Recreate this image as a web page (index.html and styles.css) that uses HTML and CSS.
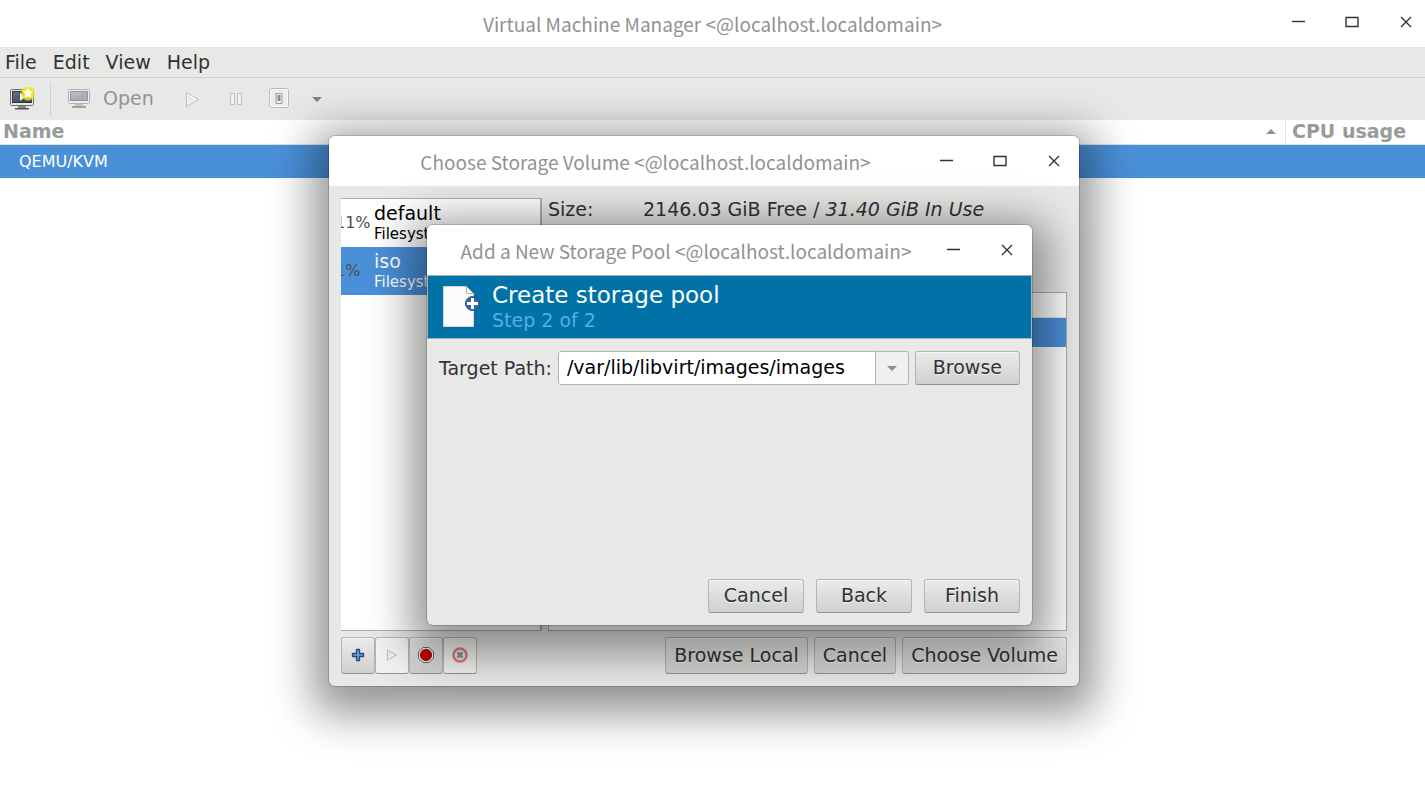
FILE: index.html
```
<!DOCTYPE html>
<html lang="en">
<head>
  <meta charset="UTF-8" />
  <meta name="viewport" content="width=device-width, initial-scale=1.0" />
  <title>Virtual Machine Manager</title>
  <link rel="stylesheet" href="styles.css">
</head>
<body>
  <main class="manager">
    <header class="titlebar titlebar-main">
      <h1 class="title">Virtual Machine Manager &lt;@localhost.localdomain&gt;</h1>
      <div class="controls">
        <button class="control" aria-label="Minimize"><svg width="16" height="16" stroke-width="1.4"><path d="M2 7.500h13" /></svg></button>
        <button class="control" aria-label="Maximize"><svg width="16" height="16" stroke-width="1.4"><path d="M2 3.500h12v9H2z" /></svg></button>
        <button class="control" aria-label="Close"><svg width="16" height="16" stroke-width="1.4"><path d="M3 3l10 10M13 3L3 13" /></svg></button>
      </div>
    </header>

    <nav class="menubar">
      <button>File</button>
      <button>Edit</button>
      <button>View</button>
      <button>Help</button>
    </nav>

    <div class="toolbar">
      <button class="tool tool-new" aria-label="New virtual machine">
        <svg width="26" height="24" viewBox="0 0 26 24">
          <defs>
            <radialGradient id="glow"><stop offset=".4" stop-color="#fdf21c" /><stop offset=".75" stop-color="#f0e62e" stop-opacity=".8" /><stop offset="1" stop-color="#f2ea40" stop-opacity="0" /></radialGradient>
            <linearGradient id="screen" x2="1" y2="1"><stop stop-color="#68798f" /><stop offset="1" stop-color="#27364a" /></linearGradient>
          </defs>
          <rect x="1.500" y="2.500" width="23" height="16" rx="1" fill="#e6e6e2" stroke="#6e706c" />
          <rect x="3.500" y="4.500" width="19" height="11" fill="url(#screen)" stroke="#303a47" />
          <path d="M11 6l5 4-5 4z" fill="#fff" />
          <path d="M9 19h8v2H9z" fill="#888a85" />
          <path d="M6 21h14v1.500H6z" fill="#555753" />
          <circle cx="19" cy="6.500" r="8" fill="url(#glow)" />
          <path d="M19 1l1.600 3.300 3.700.3-2.800 2.500.9 3.700-3.400-1.900-3.400 1.900.9-3.700-2.800-2.500 3.700-.3z" fill="#fff" />
        </svg>
      </button>
      <span class="tool-separator"></span>
      <button class="tool tool-open" disabled>
        <svg width="24" height="22" viewBox="0 0 24 22">
          <rect x="1.500" y="2.500" width="21" height="14" rx="1" fill="#eeeeec" stroke="#b1b3b0" />
          <rect x="3.500" y="4.500" width="17" height="9" fill="#a6afbb" stroke="#8d96a3" />
          <path d="M4 5h16L4 11z" fill="#b4bbc4" />
          <path d="M8 17h8v2H8z" fill="#c0c1bf" />
          <path d="M5 19h14v2H5z" fill="#a1a3a0" />
        </svg>
        <span>Open</span>
      </button>
      <button class="tool tool-run" disabled aria-label="Run">
        <svg width="24" height="24" viewBox="0 0 24 24"><path d="M6.500 5.500v14l12-7z" fill="#ececea" stroke="#bcbebb" /><path d="M7.500 7.500v10l9-5z" fill="none" stroke="#f8f8f7" /></svg>
      </button>
      <button class="tool tool-pause" disabled aria-label="Pause">
        <svg width="24" height="24" viewBox="0 0 24 24"><path d="M6.500 6.500h4v11h-4zM13.500 6.500h4v11h-4z" fill="#f2f2f1" stroke="#bfc1be" /></svg>
      </button>
      <button class="tool tool-power" disabled aria-label="Shut down">
        <svg width="24" height="24" viewBox="0 0 24 24">
          <rect x="2.500" y="1.500" width="19" height="19" rx="2" fill="#ededec" stroke="#b9bbb8" />
          <rect x="3.500" y="2.500" width="17" height="17" rx="1" fill="none" stroke="#fafafa" />
          <path d="M9 6.500h6v10H9z" fill="#eee" stroke="#9b9d9a" />
          <path d="M10.500 8h3v6h-3z" fill="#8c8e8b" />
        </svg>
      </button>
      <button class="tool tool-more" disabled aria-label="More"><svg width="10" height="5"><path d="M0 0h10L5 5z" /></svg></button>
    </div>

    <table class="machines">
      <thead>
        <tr>
          <th><span class="sort-head">Name<svg width="10" height="5"><path d="M0 5h10L5 0z" /></svg></span></th>
          <th class="cpu">CPU usage</th>
        </tr>
      </thead>
      <tbody>
        <tr><td>QEMU/KVM</td><td></td></tr>
      </tbody>
    </table>
  </main>

  <section class="window volume-window" role="dialog" aria-labelledby="volume-title">
    <header class="titlebar">
      <h2 class="title" id="volume-title">Choose Storage Volume &lt;@localhost.localdomain&gt;</h2>
      <div class="controls">
        <button class="control" aria-label="Minimize"><svg width="16" height="16" stroke-width="1.4"><path d="M2 7.500h13" /></svg></button>
        <button class="control" aria-label="Maximize"><svg width="16" height="16" stroke-width="1.4"><path d="M2 3.500h12v9H2z" /></svg></button>
        <button class="control" aria-label="Close"><svg width="16" height="16" stroke-width="1.4"><path d="M3 3l10 10M13 3L3 13" /></svg></button>
      </div>
    </header>
    <div class="volume-body">
      <div class="panes">
        <ul class="pools">
          <li>
            <span class="percent">11%</span>
            <span class="pool"><span class="pool-name">default</span><span>Filesystem</span></span>
          </li>
          <li class="selected">
            <span class="percent">1%</span>
            <span class="pool"><span class="pool-name">iso</span><span>Filesystem</span></span>
          </li>
        </ul>
        <div class="details">
          <dl class="facts">
            <dt>Size:</dt>
            <dd>2146.03 GiB Free / <em>31.40 GiB In Use</em></dd>
          </dl>
          <div class="volumes">
            <table>
              <thead><tr><th></th></tr></thead>
              <tbody><tr><td></td></tr></tbody>
            </table>
          </div>
        </div>
      </div>
      <footer class="volume-actions">
        <div class="pool-buttons">
          <button class="btn" aria-label="Add pool">
            <svg width="16" height="16" viewBox="0 0 16 16"><path d="M6.500 2.500h3v4h4v3h-4v4h-3v-4h-4v-3h4z" fill="#6f9bd1" stroke="#204a87" stroke-width="1.300" stroke-linejoin="round" /></svg>
          </button>
          <button class="btn" disabled aria-label="Start pool">
            <svg width="16" height="16" viewBox="0 0 16 16"><path d="M3.500 3v10l9-5z" fill="#eee" stroke="#bcbdbb" /></svg>
          </button>
          <button class="btn" aria-label="Stop pool">
            <svg width="16" height="16" viewBox="0 0 16 16"><path d="M5 .5h6L15.500 5v6L11 15.500H5L.5 11V5z" fill="#eeeeec" stroke="#666864" /><circle cx="8" cy="8" r="5.500" fill="#c00" stroke="#900" /></svg>
          </button>
          <button class="btn" disabled aria-label="Delete pool">
            <svg width="16" height="16" viewBox="0 0 16 16"><circle cx="8" cy="8" r="6.500" fill="#efe9e9" stroke="#df7b7b" stroke-width="2.500" /><path d="M5.500 5.500l5 5M10.500 5.500l-5 5" stroke="#8f918e" stroke-width="2.500" /></svg>
          </button>
        </div>
        <div class="volume-buttons">
          <button class="btn">Browse Local</button>
          <button class="btn">Cancel</button>
          <button class="btn">Choose Volume</button>
        </div>
      </footer>
    </div>
  </section>

  <section class="window pool-window" role="dialog" aria-labelledby="pool-title">
    <header class="titlebar">
      <h2 class="title" id="pool-title">Add a New Storage Pool &lt;@localhost.localdomain&gt;</h2>
      <div class="controls">
        <button class="control" aria-label="Minimize"><svg width="16" height="16" stroke-width="1.4"><path d="M2 7.500h13" /></svg></button>
        <button class="control" aria-label="Close"><svg width="16" height="16" stroke-width="1.4"><path d="M3 3l10 10M13 3L3 13" /></svg></button>
      </div>
    </header>
    <div class="banner">
      <svg width="40" height="44" viewBox="0 0 40 44">
        <path d="M2.500 2.500h23l7 7v33h-30z" fill="#fbfbfa" stroke="#d6d6d2" />
        <path d="M25.500 2.500v7h7z" fill="#fff" stroke="#b5b5b0" />
        <circle cx="31.500" cy="19.500" r="7" fill="#3465a4" stroke="#2b568e" />
        <path d="M31.500 14v11M26 19.500h11" stroke="#fff" stroke-width="3" />
      </svg>
      <div>
        <h3>Create storage pool</h3>
        <p>Step 2 of 2</p>
      </div>
    </div>
    <form class="pool-form">
      <div class="path-row">
        <label for="target-path">Target Path:</label>
        <div class="combo">
          <input type="text" id="target-path" value="/var/lib/libvirt/images/images">
          <button type="button" aria-label="Show paths"><svg width="10" height="5"><path d="M0 0h10L5 5z" /></svg></button>
        </div>
        <button type="button" class="btn">Browse</button>
      </div>
      <div class="wizard-buttons">
        <button type="button" class="btn">Cancel</button>
        <button type="button" class="btn">Back</button>
        <button type="button" class="btn">Finish</button>
      </div>
    </form>
  </section>
</body>
</html>
```

FILE: styles.css
```
* {
  box-sizing: border-box;
}

body {
  margin: 0;
  background: #fff;
  color: #2e3436;
  font-family: "DejaVu Sans", sans-serif;
  font-size: 19px;
  line-height: 22px;
}

button, input {
  font: inherit;
  color: inherit;
  margin: 0;
}

h1, h2, h3, p, dl, dd, ul {
  margin: 0;
  padding: 0;
  font-weight: normal;
}

svg {
  display: block;
}

table {
  width: 100%;
  border-spacing: 0;
}

/* title bars */
.titlebar {
  display: flex;
  align-items: center;
  height: 50px;
  background: #fff;
}

.titlebar-main {
  position: relative;
  height: 47px;
}

.title {
  flex: 1;
  padding-top: 2px;
  text-align: center;
  white-space: nowrap;
  color: #929292;
  font-family: "Noto Sans CJK SC", sans-serif;
  font-size: 19px;
  line-height: 28px;
}

.titlebar-main .title {
  padding-top: 0;
}

.controls {
  display: flex;
  gap: 18px;
  padding-right: 7px;
}

.titlebar-main .controls {
  position: absolute;
  top: 4px;
  right: 1px;
  padding-right: 0;
}

.control {
  display: flex;
  align-items: center;
  justify-content: center;
  width: 36px;
  height: 36px;
  padding: 0;
  border: none;
  background: none;
}

.control svg {
  fill: none;
  stroke: #2e3436;
}

/* main window */
.manager {
  min-height: 100vh;
}

.menubar {
  display: flex;
  gap: 16px;
  height: 31px;
  padding: 0 5px;
  background: #e8e8e6;
  border-bottom: 1px solid #cfcfcd;
}

.menubar button {
  padding: 0;
  border: none;
  background: none;
}

.toolbar {
  display: flex;
  align-items: center;
  height: 42px;
  padding-left: 9px;
  background: #e8e8e6;
}

.tool {
  display: flex;
  align-items: center;
  padding: 0;
  border: none;
  background: none;
}

.tool-separator {
  height: 34px;
  margin: 0 16px 0 15px;
  border-left: 1px solid #d0d0ce;
}

.tool-open {
  gap: 12px;
  margin-right: 26px;
  padding-bottom: 2px;
  color: #919494;
}

.tool-run {
  margin-right: 20px;
}

.tool-pause {
  margin-right: 19px;
}

.tool-power {
  margin-right: 21px;
}

.tool-more svg {
  fill: #7f8485;
}

.machines th {
  height: 25px;
  padding: 0 3px 2px;
  border-bottom: 1px solid #e0e0de;
  color: #979b9a;
  text-align: left;
}

.machines .cpu {
  width: 140px;
  padding: 0 6px 2px;
  border-left: 1px solid #e0e0de;
}

.sort-head {
  display: flex;
  align-items: center;
  justify-content: space-between;
  padding-right: 6px;
}

.sort-head svg {
  fill: #8f9392;
}

.machines td {
  height: 33px;
  padding: 0 19px;
  background: #4a90d9;
  color: #fff;
  font-size: 16px;
}

/* floating windows */
.window {
  position: absolute;
  display: flex;
  flex-direction: column;
  overflow: hidden;
  background: #e8e8e6;
  border-radius: 6px;
  box-shadow: 0 0 0 1px rgba(0, 0, 0, 0.16), 0 12px 44px 16px rgba(0, 0, 0, 0.42);
}

.volume-window {
  left: 329px;
  top: 136px;
  width: 750px;
  height: 550px;
}

.pool-window {
  left: 427px;
  top: 225px;
  width: 605px;
  height: 400px;
}

.volume-window .titlebar {
  padding-left: 34px;
}

.pool-window .titlebar {
  padding-left: 10px;
}

.btn {
  display: flex;
  align-items: center;
  justify-content: center;
  height: 34px;
  padding: 0 8px 2px;
  border: 1px solid #b4b4b0;
  border-bottom-color: #93938f;
  border-radius: 3px;
  background: linear-gradient(#ebebea, #d0d0ce);
  box-shadow: inset 0 1px #f6f6f5;
  text-shadow: 0 1px #f0f0ef;
  white-space: nowrap;
}

/* choose volume */
.volume-body {
  flex: 1;
  display: flex;
  flex-direction: column;
  gap: 6px;
  padding: 12px;
}

.panes {
  flex: 1;
  display: flex;
  gap: 6px;
}

.pools {
  width: 201px;
  overflow: hidden;
  list-style: none;
  background: #fff;
  border: 1px solid #adada9;
  border-left: none;
  border-right-width: 2px;
  color: #000;
  font-size: 16px;
}

.pools li {
  display: flex;
  align-items: center;
  height: 48px;
}

.pools .selected {
  background: #4a90d9;
  color: #fff;
}

.percent {
  width: 33px;
  margin-left: -6px;
  margin-right: 6px;
  color: #4c4f50;
}

.pool {
  display: flex;
  flex-direction: column;
  white-space: nowrap;
  font-size: 15px;
  line-height: 20px;
}

.pool-name {
  font-size: 19px;
  line-height: 22px;
}

.details {
  flex: 1;
  display: flex;
  flex-direction: column;
  justify-content: space-between;
}

.facts {
  display: flex;
}

.facts dt {
  width: 95px;
}

.volumes {
  height: 339px;
  background: #fff;
  border: 1px solid #adada9;
}

.volumes th {
  height: 25px;
  padding: 0;
  border-bottom: 1px solid #e0e0de;
}

.volumes td {
  height: 29px;
  background: #4a90d9;
}

.volume-actions {
  display: flex;
  justify-content: space-between;
}

.volume-actions .btn {
  height: 37px;
}

.pool-buttons {
  display: flex;
}

.pool-buttons .btn {
  width: 34px;
  padding: 0 0 2px;
}

.pool-buttons .btn:disabled {
  background: #f2f2f1;
}

.volume-buttons {
  display: flex;
  gap: 6px;
}

/* new pool wizard */
.banner {
  display: flex;
  align-items: center;
  gap: 11px;
  height: 64px;
  padding: 0 13px 2px;
  background: #0072a8;
  border: 1px solid #b0b0ac;
  color: #fff;
}

.banner h3 {
  font-size: 23px;
  line-height: 28px;
}

.banner p {
  color: #55aee3;
  line-height: 23px;
}

.pool-form {
  flex: 1;
  display: flex;
  flex-direction: column;
  justify-content: space-between;
  padding: 12px;
}

.path-row {
  display: flex;
  align-items: center;
  gap: 6px;
}

.path-row .btn {
  padding: 0 17px 2px;
}

.combo {
  flex: 1;
  display: flex;
  height: 34px;
}

.combo input {
  flex: 1;
  min-width: 0;
  padding: 0 8px 2px;
  border: 1px solid #b4b4b0;
  border-radius: 3px 0 0 3px;
  background: #fff;
  color: #000;
}

.combo button {
  display: flex;
  align-items: center;
  justify-content: center;
  width: 33px;
  border: 1px solid #b4b4b0;
  border-left: none;
  border-radius: 0 3px 3px 0;
  background: #f0f0f0;
}

.combo svg {
  fill: #8b8f90;
}

.wizard-buttons {
  display: flex;
  justify-content: flex-end;
  gap: 12px;
}

.wizard-buttons .btn {
  width: 96px;
}
```
